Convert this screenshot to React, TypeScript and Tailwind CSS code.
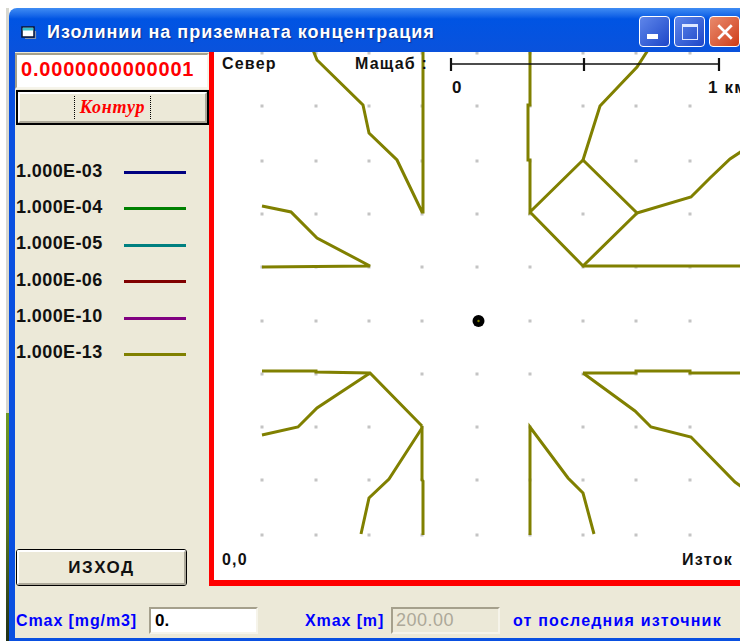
import React from 'react';

const OLIVE = '#808000';

const legend = [
  { label: '1.000E-03', color: '#000080' },
  { label: '1.000E-04', color: '#008000' },
  { label: '1.000E-05', color: '#008080' },
  { label: '1.000E-06', color: '#800000' },
  { label: '1.000E-10', color: '#800080' },
  { label: '1.000E-13', color: '#808000' },
];

const gridX = [262, 316, 369, 422, 477, 530, 583, 636, 690];
const gridY = [53, 106, 161, 214, 267, 321, 374, 427, 480, 535];

// isoline segments, in the plot's own coordinates
const isolines = [
  '313,50 317,60 363,105 369,133 397,160 422,212 423,212 423,50',
  '262,206 291,212 317,238 370,266 262,267',
  '530,50 530,105 528,105 528,160 530,160 530,212 583,160 637,213 583,266 530,212',
  '583,160 600,106 618,87 637,67 648,50',
  '637,213 691,197 710,178 730,159 742,151',
  '583,266 742,266',
  '262,371 316,371 316,372 370,373 422,426',
  '370,373 317,408 298,427 262,435',
  '422,426 422,480 423,481 423,535',
  '422,428 389,479 369,498 361,534',
  '583,373 636,373 636,371 690,371 690,373 742,373',
  '583,373 635,411 651,427 691,437 735,482 742,487',
  '530,535 530,427 568,478 583,493 594,534',
];

const ContourPlot = () => (
  <svg viewBox="214 52 526 528" className="absolute inset-0 w-[526px] h-[528px]">
    {gridY.map((y) =>
      gridX.map((x) => <rect key={`${x}-${y}`} x={x - 1.5} y={y - 1.5} width="3" height="3" fill="#c4c4c4" />)
    )}
    {isolines.map((pts) => (
      <polyline key={pts} points={pts} fill="none" stroke={OLIVE} strokeWidth="3" />
    ))}
    {/* distance scale */}
    <path d="M451 64H719" stroke="#111" strokeWidth="1.4" />
    <path d="M451 58V71M584 58V71M719 58V71" stroke="#111" strokeWidth="2.2" />
    {/* source point */}
    <circle cx="478.500" cy="321" r="6" fill="#000" />
    <circle cx="478.500" cy="321" r="1.200" fill={OLIVE} />
  </svg>
);

const App: React.FC = () => {
  return (
    <div className="w-[740px] h-[641px] overflow-hidden bg-white flex pt-2 pl-[6px] font-['Liberation_Sans',Arial,sans-serif]">
      <div className="w-[3px] flex flex-col">
        <div className="h-[405px] bg-[#d8d8d0]" />
        <div className="flex-1 bg-gradient-to-b from-[#6f9a24] via-[#55761f] to-[#1f2f18]" />
      </div>

      <div className="flex-1 flex flex-col min-w-0">
        {/* title bar */}
        <div className="h-[44px] shrink-0 rounded-tl-lg flex items-center bg-gradient-to-b from-[#3f8cf3] via-[#0054e3] via-25% to-[#0a52dc] pl-[12px]">
          <svg viewBox="0 0 16 14" className="w-[16px] h-[14px] mt-[6px]">
            <path d="M1 1H13V11H1Z" fill="#fff" stroke="#0a1430" strokeWidth="1.500" />
            <path d="M1.800 1.800H12.200V4.500H1.800Z" fill="#35c0cc" />
            <path d="M14.500 5V12.500H4" fill="none" stroke="#8a94a8" strokeWidth="1.200" />
          </svg>
          <span className="ml-[10px] mt-[5px] text-white font-bold text-[18px] tracking-[1px] whitespace-nowrap [text-shadow:1px_1px_1px_#0f2f90]">
            Изолинии на приземната концентрация
          </span>
          <div className="ml-auto flex gap-[4px] mt-[3px]">
            <div className="w-[31px] h-[31px] rounded-[4px] border border-white bg-gradient-to-br from-[#5f86ea] to-[#1f45c8] flex items-end pl-[7px] pb-[7px]">
              <div className="w-[11px] h-[5px] bg-white" />
            </div>
            <div className="w-[31px] h-[31px] rounded-[4px] border border-white bg-gradient-to-br from-[#5f86ea] to-[#1f45c8] flex items-center justify-center">
              <div className="w-[16px] h-[16px] border border-[#dfe8ff] border-t-[3px]" />
            </div>
            <div className="w-[31px] h-[31px] rounded-[4px] border border-white bg-gradient-to-br from-[#e88a6c] to-[#cf3a10] flex items-center justify-center">
              <svg viewBox="0 0 16 16" className="w-[18px] h-[18px]">
                <path d="M2 2L14 14M14 2L2 14" stroke="#fff" strokeWidth="2.400" />
              </svg>
            </div>
          </div>
        </div>

        {/* client area */}
        <div className="flex-1 flex flex-col min-h-0 bg-[#ece9d8] border-l-[6px] border-b-[3px] border-[#0a50e0]">
          <div className="flex-1 flex min-h-0">
            <div className="w-[194px] shrink-0 flex flex-col pb-0 pt-px">
              <input
                readOnly
                value="0.0000000000001"
                className="w-full h-[36px] bg-white text-[#ff0000] font-bold text-[20px] tracking-[0.8px] pl-[4px] pb-[3px] border-2 border-t-[#a5a08c] border-l-[#a5a08c] border-r-[#f6f4ea] border-b-[#f6f4ea] outline-none"
              />
              <button className="ml-px mt-px w-[193px] h-[35px] border-2 border-black bg-[#ece9d8] p-0">
                <span className="h-full flex items-center justify-center border-2 border-t-white border-l-white border-r-[#aca899] border-b-[#aca899]">
                  <span className="px-[5px] h-[23px] flex items-center border-x border-dotted border-black text-[#ff0000] font-bold italic text-[18px] tracking-[0.8px] font-['Liberation_Serif',serif]">
                    Контур
                  </span>
                </span>
              </button>

              <div className="mt-[36px] ml-px flex flex-col gap-[16.4px]">
                {legend.map((row) => (
                  <div key={row.label} className="h-[20px] flex items-center">
                    <span className="w-[108px] font-bold text-[18px] tracking-[0.4px] text-[#111]">{row.label}</span>
                    <span className="w-[62px] h-[3px] mt-[3px]" style={{ backgroundColor: row.color }} />
                  </div>
                ))}
              </div>

              <button className="mt-auto ml-px w-[171px] h-[37px] rounded-[3px] border border-black bg-[#ece9d8] p-0">
                <span className="h-full flex items-center justify-center rounded-[2px] border-2 border-t-white border-l-white border-r-[#aca899] border-b-[#aca899] font-bold text-[17px] tracking-[1.5px] text-[#111]">
                  ИЗХОД
                </span>
              </button>
            </div>

            {/* drawing area */}
            <div className="relative flex-1 bg-white border-l-[5px] border-b-[6px] border-[#ff0000] font-bold text-[16px] text-[#111] tracking-[1.2px]">
              <ContourPlot />
              <span className="absolute left-[8px] top-[0px]">Север</span>
              <span className="absolute left-[141px] top-[0px]">Мащаб :</span>
              <span className="absolute left-[238px] top-[23px] text-[17px]">0</span>
              <span className="absolute left-[494px] top-[23px] text-[17px] whitespace-nowrap">1 км</span>
              <span className="absolute left-[8px] top-[496px]">0,0</span>
              <span className="absolute left-[468px] top-[496px]">Изток</span>
            </div>
          </div>

          {/* readouts under the plot */}
          <div className="h-[52px] shrink-0 flex items-center text-[#0000ff] font-bold text-[16px] tracking-[0.9px] pt-[17px]">
            <span className="ml-px w-[133px] whitespace-nowrap">Cmax [mg/m3]</span>
            <input
              readOnly
              value="0."
              className="w-[109px] h-[27px] bg-white text-black text-[17px] font-bold tracking-normal pl-[4px] border-2 border-t-[#a5a08c] border-l-[#a5a08c] border-r-[#f6f4ea] border-b-[#f6f4ea] outline-none"
            />
            <span className="ml-[47px] w-[86px] whitespace-nowrap">Xmax [m]</span>
            <input
              readOnly
              value="200.00"
              className="w-[109px] h-[27px] bg-[#ece9d8] text-[#aca899] text-[18px] font-normal tracking-[0.5px] pl-[3px] border-2 border-t-[#a5a08c] border-l-[#a5a08c] border-r-[#f6f4ea] border-b-[#f6f4ea] outline-none"
            />
            <span className="ml-[13px] whitespace-nowrap tracking-[1.2px]">от последния източник</span>
          </div>
        </div>
      </div>
    </div>
  );
};

export default App;
